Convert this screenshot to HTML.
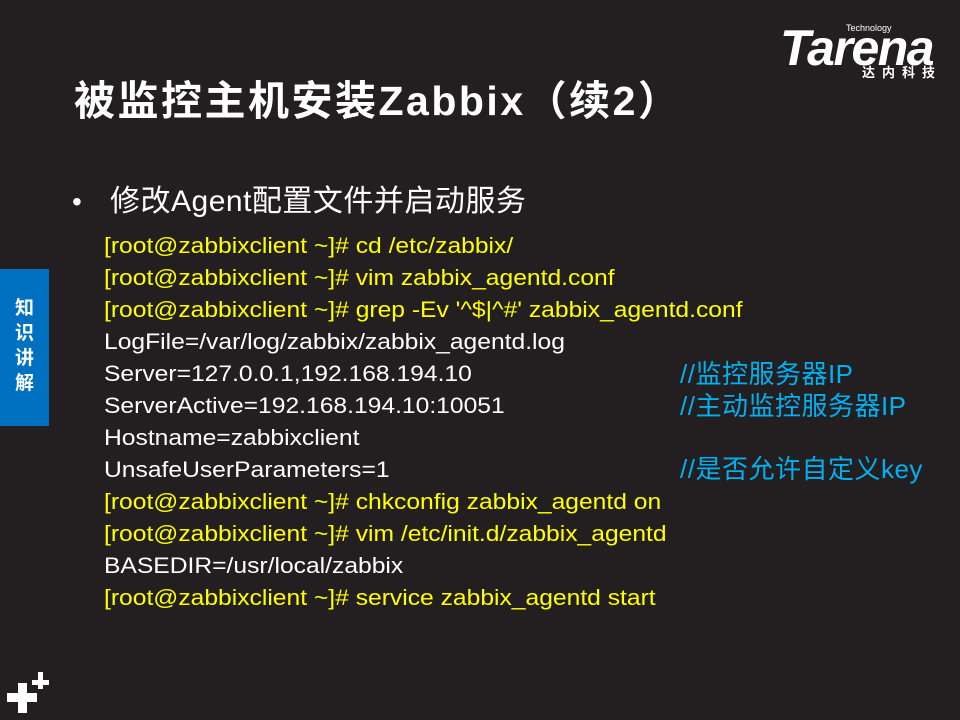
<!DOCTYPE html>
<html><head><meta charset="utf-8"><style>
html,body{margin:0;padding:0}
body{width:960px;height:720px;background:#231f20;position:relative;overflow:hidden;font-family:"Liberation Sans","Noto Sans CJK SC",sans-serif;color:#fff}
.t{position:absolute;white-space:nowrap}
.title{left:74px;top:76px;font-size:41px;font-weight:bold;letter-spacing:2.5px;line-height:50px}
.bul{left:110px;top:182px;font-size:30px;letter-spacing:0.5px;line-height:40px}
.dot{left:72px;top:182px;font-size:28px;line-height:40px}
.l{position:absolute;left:104px;font-size:22px;white-space:nowrap;line-height:28px;transform:scaleX(1.12);transform-origin:0 0}
.y{color:#ffff00}
.c{position:absolute;left:680px;font-size:26px;color:#00b0f0;white-space:nowrap;line-height:30px;letter-spacing:0.5px}
.tab{position:absolute;left:0;top:269px;width:49px;height:157px;background:#0070c0;color:#fff;font-weight:bold;font-size:19px;line-height:25px;text-align:center;padding-top:27px;box-sizing:border-box}
</style></head><body>
<div class="t title">被监控主机安装Zabbix（续2）</div>
<div class="t dot">•</div>
<div class="t bul">修改Agent配置文件并启动服务</div>
<div class="l y" style="top:232px">[root@zabbixclient ~]# cd /etc/zabbix/</div>
<div class="l y" style="top:264px">[root@zabbixclient ~]# vim zabbix_agentd.conf</div>
<div class="l y" style="top:296px">[root@zabbixclient ~]# grep -Ev '^$|^#' zabbix_agentd.conf</div>
<div class="l" style="top:328px">LogFile=/var/log/zabbix/zabbix_agentd.log</div>
<div class="l" style="top:360px">Server=127.0.0.1,192.168.194.10</div>
<div class="l" style="top:392px">ServerActive=192.168.194.10:10051</div>
<div class="l" style="top:424px">Hostname=zabbixclient</div>
<div class="l" style="top:456px">UnsafeUserParameters=1</div>
<div class="l y" style="top:488px">[root@zabbixclient ~]# chkconfig zabbix_agentd on</div>
<div class="l y" style="top:520px">[root@zabbixclient ~]# vim /etc/init.d/zabbix_agentd</div>
<div class="l" style="top:552px">BASEDIR=/usr/local/zabbix</div>
<div class="l y" style="top:584px">[root@zabbixclient ~]# service zabbix_agentd start</div>
<div class="c" style="top:359px">//监控服务器IP</div>
<div class="c" style="top:391px">//主动监控服务器IP</div>
<div class="c" style="top:454px">//是否允许自定义key</div>
<div class="tab">知<br>识<br>讲<br>解</div>
<div class="t" style="left:846px;top:23px;font-size:9px;color:#fff">Technology</div>
<div class="t" style="left:780px;top:18px;font-size:50px;font-weight:bold;font-style:italic;letter-spacing:-1.5px;color:#fff;line-height:60px">Tarena</div>
<div class="t" style="left:862px;top:62px;font-size:13px;font-weight:bold;letter-spacing:7px">达内科技</div>
<svg style="position:absolute;left:0;top:660px" width="60" height="60">
<rect x="7" y="33" width="30" height="9" fill="#fff"/><rect x="18" y="23" width="9" height="30" fill="#fff"/>
<rect x="32" y="20" width="17" height="5" fill="#fff"/><rect x="38" y="12" width="5" height="17" fill="#fff"/>
</svg>
</body></html>
